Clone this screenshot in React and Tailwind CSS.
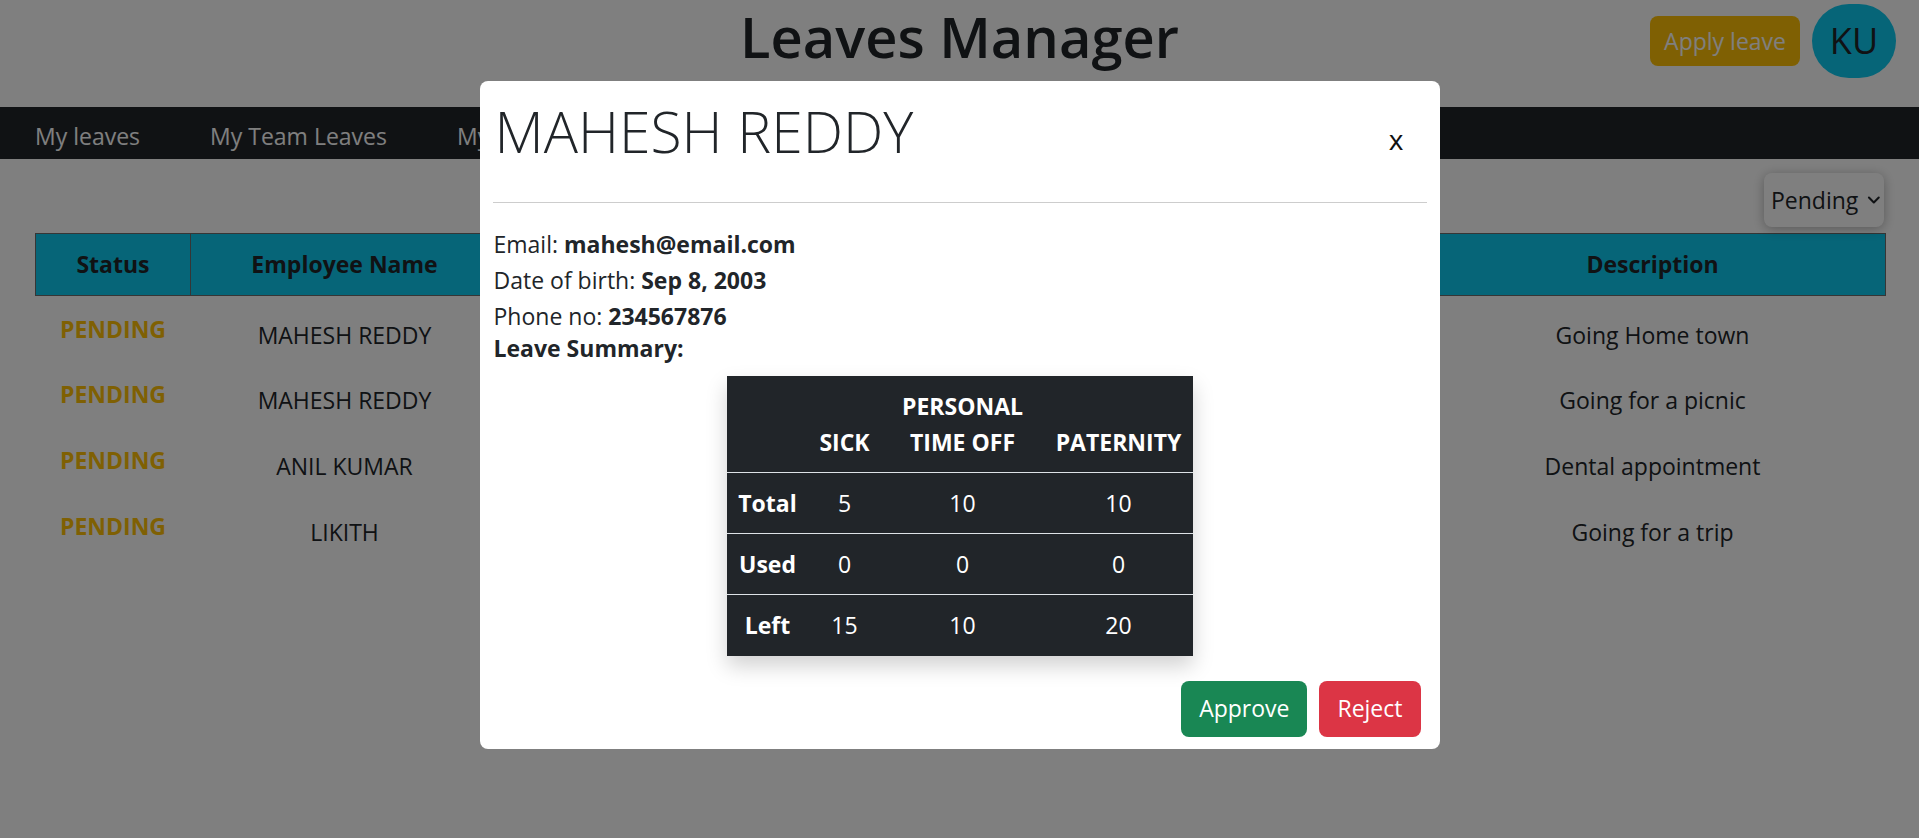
import React from 'react';
import { ChevronDown } from 'lucide-react';

const leaves = [
  { name: 'MAHESH REDDY', description: 'Going Home town' },
  { name: 'MAHESH REDDY', description: 'Going for a picnic' },
  { name: 'ANIL KUMAR', description: 'Dental appointment' },
  { name: 'LIKITH', description: 'Going for a trip' },
];

const summary = [
  { label: 'Total', sick: 5, personal: 10, paternity: 10 },
  { label: 'Used', sick: 0, personal: 0, paternity: 0 },
  { label: 'Left', sick: 15, personal: 10, paternity: 20 },
];

function Header() {
  return (
    <header className="grid grid-cols-[1fr_auto_1fr] h-[107px]">
      <div />
      <h1 className="text-[56px] leading-[72px] font-semibold text-[#212529]">Leaves Manager</h1>
      <div className="flex justify-end items-start gap-[12px] pr-[23px]">
        <button className="mt-[16px] h-[50px] px-[14px] rounded-[8px] bg-[#ffc107] text-white text-[23px] leading-[36px]">
          Apply leave
        </button>
        <div className="mt-[4px] w-[84px] h-[74px] rounded-full bg-[#0dcaf0] flex items-center justify-center text-[36px] text-[#212529]">
          KU
        </div>
      </div>
    </header>
  );
}

function Nav() {
  return (
    <nav className="flex items-center h-[52px] bg-[#212529] pl-[35px] pt-[7px] gap-[70px] text-[23px] text-white">
      <a>My leaves</a>
      <a>My Team Leaves</a>
      <a>My</a>
    </nav>
  );
}

function LeavesTable() {
  return (
    <div className="px-[35px]">
      <div className="flex justify-end mt-[14px]">
        <div className="flex items-center gap-[6px] h-[54px] w-[120px] pl-[7px] rounded-[8px] bg-white shadow-[0_2px_12px_rgba(0,0,0,0.3)] text-[23px]">
          Pending
          <ChevronDown size={20} strokeWidth={2.5} />
        </div>
      </div>
      <table className="mt-[6px] w-full table-fixed border-collapse text-center text-[23px]">
        <thead>
          <tr className="h-[62px] bg-[#0dcaf0]">
            <th className="w-[155px] border border-[#6c6c6c] font-bold">Status</th>
            <th className="w-[308px] border border-[#6c6c6c] font-bold">Employee Name</th>
            <th className="w-[307px] border border-[#6c6c6c]" />
            <th className="w-[307px] border border-[#6c6c6c]" />
            <th className="w-[307px] border border-[#6c6c6c]" />
            <th className="w-[466px] border border-[#6c6c6c] font-bold">Description</th>
          </tr>
        </thead>
        <tbody>
          {leaves.map((l, i) => (
            <tr key={i} className="h-[66px]">
              <td className="font-bold text-[#ffc107]">PENDING</td>
              <td className="pt-[12px]">{l.name}</td>
              <td />
              <td />
              <td />
              <td className="pt-[12px]">{l.description}</td>
            </tr>
          ))}
        </tbody>
      </table>
    </div>
  );
}

function EmployeeModal() {
  return (
    <div className="fixed inset-0 bg-black/50 flex justify-center items-start pt-[81px]">
      <div className="w-[960px] bg-white rounded-[8px]">
        <div className="flex items-center justify-between pl-[15px] pr-[36px] pt-[14px]">
          <h2 className="text-[57px] leading-[72px] font-light text-[#212529]">MAHESH REDDY</h2>
          <button className="mt-[16px] text-[28px] leading-none text-[#111]">x</button>
        </div>
        <div className="mx-[13px] mt-[35px] border-t border-[#cdcdcd]" />
        <div className="px-[14px] pt-[23px] text-[23px] text-[#212529]">
          <p className="leading-[36px]">Email: <b>mahesh@email.com</b></p>
          <p className="leading-[36px]">Date of birth: <b>Sep 8, 2003</b></p>
          <p className="leading-[36px]">Phone no: <b>234567876</b></p>
          <p className="leading-[28px] font-bold">Leave Summary:</p>
          <table className="mt-[14px] mx-auto w-[466px] table-fixed border-collapse bg-[#212529] text-white text-center shadow-[0_10px_20px_rgba(0,0,0,0.18)]">
            <thead>
              <tr>
                <th className="w-[82px]" />
                <th className="w-[72px] align-bottom py-[12px] leading-[36px] font-bold">SICK</th>
                <th className="w-[164px] align-bottom py-[12px] leading-[36px] font-bold">PERSONAL<br />TIME OFF</th>
                <th className="w-[148px] align-bottom py-[12px] leading-[36px] font-bold">PATERNITY</th>
              </tr>
            </thead>
            <tbody>
              {summary.map((r) => (
                <tr key={r.label} className="h-[61px] border-t border-[#dee2e6]">
                  <td className="font-bold">{r.label}</td>
                  <td>{r.sick}</td>
                  <td>{r.personal}</td>
                  <td>{r.paternity}</td>
                </tr>
              ))}
            </tbody>
          </table>
        </div>
        <div className="flex justify-end gap-[12px] mt-[25px] pr-[19px] pb-[12px]">
          <button className="h-[56px] px-[18px] rounded-[8px] bg-[#198754] text-white text-[23px]">Approve</button>
          <button className="h-[56px] px-[18px] rounded-[8px] bg-[#dc3545] text-white text-[23px]">Reject</button>
        </div>
      </div>
    </div>
  );
}

export default function App() {
  return (
    <div className="relative min-h-[838px] bg-white text-[#212529] font-['Open_Sans',sans-serif]">
      <Header />
      <Nav />
      <LeavesTable />
      <EmployeeModal />
    </div>
  );
}
